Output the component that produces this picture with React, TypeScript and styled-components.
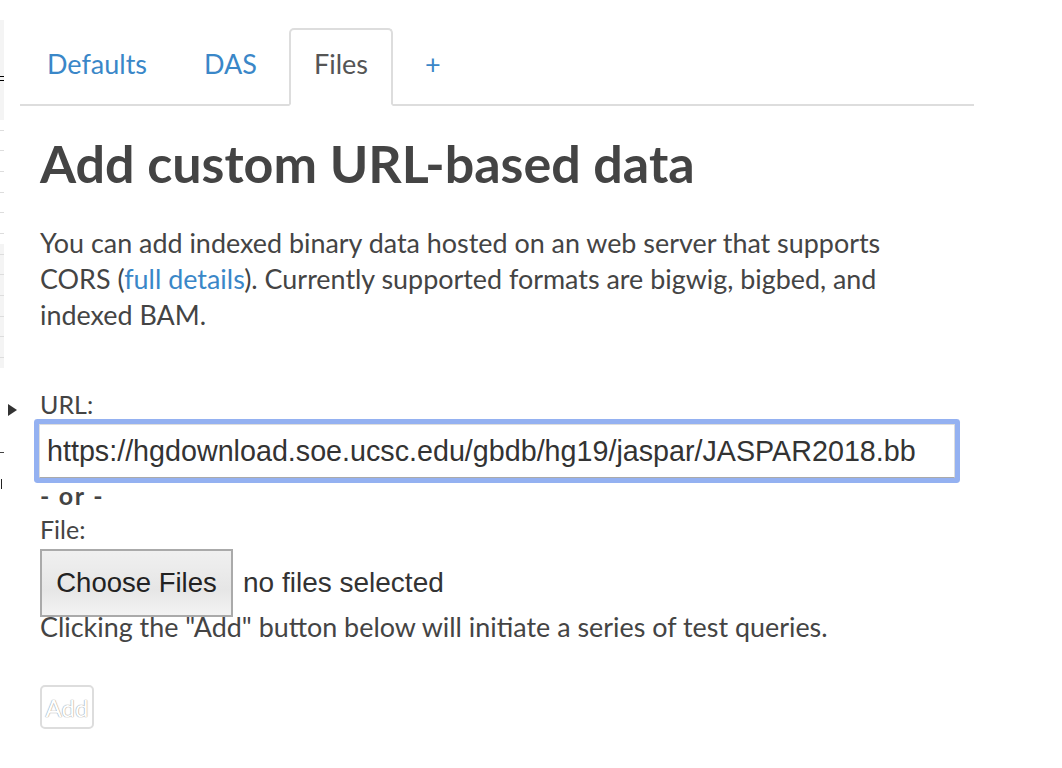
import React from "react";
import styled, { createGlobalStyle } from "styled-components";

const Global = createGlobalStyle`
  html, body { margin: 0; padding: 0; background: #fff; }
  body { font-family: Lato, "Open Sans", sans-serif; color: #444; }
  * { box-sizing: border-box; }
`;

const Page = styled.div`
  display: flex;
  width: 1062px;
  height: 768px;
  overflow: hidden;
  background: #fff;
`;

const Gutter = styled.div`
  width: 20px;
  flex: none;
  display: flex;
  flex-direction: column;
  padding-top: 20px;
`;

const GutterBlock = styled.div<{ $h: number; $bg: string }>`
  width: 4px;
  height: ${(p) => p.$h}px;
  background: ${(p) => p.$bg};
  display: flex;
  flex-direction: column;
  justify-content: space-around;
`;

const GutterTick = styled.div`
  width: 4px;
  height: 1px;
  background: #ddd;
`;

const Equals = styled.div`
  width: 4px;
  height: 5px;
  margin-top: 16px;
  border-top: 1px solid #000;
  border-bottom: 1px solid #000;
`;

const Triangle = styled.div`
  margin: 36px 0 0 8px;
  width: 0;
  height: 0;
  border-top: 6px solid transparent;
  border-bottom: 6px solid transparent;
  border-left: 9px solid #333;
`;

const Dash = styled.div`
  margin-top: 36px;
  width: 4px;
  height: 1px;
  background: #444;
`;

const Paren = styled.div`
  margin-top: 26px;
  width: 2px;
  height: 10px;
  border-left: 1px solid #222;
  margin-left: 1px;
`;

const Main = styled.div`
  width: 954px;
  flex: none;
`;

const TabBar = styled.ul`
  list-style: none;
  margin: 28px 0 0 0;
  padding: 0 0 0 2px;
  display: flex;
  gap: 7px;
  border-bottom: 2px solid #ddd;
  height: 78px;
`;

const Tab = styled.li<{ $active?: boolean }>`
  height: 78px;
  padding: 0 23px 8px;
  display: flex;
  align-items: center;
  font-size: 27px;
  color: ${(p) => (p.$active ? "#555" : "#3a87c8")};
  border: 2px solid ${(p) => (p.$active ? "#ddd" : "transparent")};
  border-bottom-color: ${(p) => (p.$active ? "#fff" : "transparent")};
  border-radius: 5px 5px 0 0;
  background: ${(p) => (p.$active ? "#fff" : "transparent")};
  margin-bottom: -2px;
`;

const Content = styled.div`
  padding: 0 20px;
`;

const Heading = styled.h1`
  margin: 27px 0 0 0;
  font-size: 52px;
  font-weight: 700;
  line-height: 60px;
  color: #444;
`;

const Para = styled.p`
  margin: 32px 0 0 0;
  font-size: 26.9px;
  line-height: 36px;
  color: #444;
  white-space: nowrap;
`;

const Link = styled.a`
  color: #3a87c8;
  text-decoration: none;
`;

const Label = styled.div`
  margin-top: 54px;
  font-size: 25px;
  line-height: 34px;
  color: #444;
`;

const UrlInput = styled.input`
  display: block;
  width: 916px;
  height: 54px;
  margin: 3px 0 0 -1px;
  padding: 0 7px;
  font-family: "Liberation Sans", Arial, sans-serif;
  font-size: 28.7px;
  color: #333;
  border: 1px solid #ddd;
  border-bottom-color: #aaa;
  border-radius: 1px;
  outline: none;
  box-shadow: 0 0 0 5px #94b1f1;
`;

const Or = styled.div`
  margin-top: 3px;
  font-size: 25px;
  font-weight: 700;
  line-height: 28px;
  letter-spacing: 1.7px;
  color: #444;
`;

const FileLabel = styled.div`
  font-size: 25px;
  line-height: 40px;
  color: #444;
`;

const FileRow = styled.div`
  display: flex;
  align-items: center;
  gap: 10px;
  height: 68px;
`;

const ChooseButton = styled.button`
  height: 68px;
  width: 193px;
  padding: 0;
  font-family: "Liberation Sans", Arial, sans-serif;
  font-size: 27.5px;
  color: #222;
  background: linear-gradient(#f0f0f0, #e6e6e6 60%, #f3f3f3);
  border: 2px solid #aaa;
  border-radius: 0;
`;

const NoFiles = styled.span`
  font-family: "Liberation Sans", Arial, sans-serif;
  font-size: 28px;
  color: #333;
`;

const Note = styled.div`
  margin-top: -5px;
  font-size: 26.9px;
  line-height: 30px;
  color: #444;
`;

const AddButton = styled.button`
  display: block;
  margin-top: 43px;
  width: 54px;
  height: 44px;
  padding: 0;
  font-family: Lato, sans-serif;
  font-size: 24px;
  color: #fff;
  text-shadow: 0 0 1px #999, 0 0 1px #999;
  background: #fff;
  border: 2px solid #ddd;
  border-radius: 5px;
`;

export default function App() {
  return (
    <Page>
      <Global />
      <Gutter>
        <GutterBlock $h={100} $bg="#f4f4f4">
          <Equals />
        </GutterBlock>
        <GutterBlock $h={124} $bg="#fff">
          <GutterTick />
          <GutterTick />
          <GutterTick />
          <GutterTick />
          <GutterTick />
          <GutterTick />
        </GutterBlock>
        <GutterBlock $h={124} $bg="#f4f4f4">
          <GutterTick />
          <GutterTick />
          <GutterTick />
          <GutterTick />
          <GutterTick />
          <GutterTick />
        </GutterBlock>
        <Triangle />
        <Dash />
        <Paren />
      </Gutter>
      <Main>
        <TabBar>
          <Tab>Defaults</Tab>
          <Tab>DAS</Tab>
          <Tab $active>Files</Tab>
          <Tab>+</Tab>
        </TabBar>
        <Content>
          <Heading>Add custom URL-based data</Heading>
          <Para>
            You can add indexed binary data hosted on an web server that supports
            <br />
            CORS (<Link href="#">full details</Link>). Currently supported formats are bigwig, bigbed, and
            <br />
            indexed BAM.
          </Para>
          <Label>URL:</Label>
          <UrlInput
            readOnly
            value="https://hgdownload.soe.ucsc.edu/gbdb/hg19/jaspar/JASPAR2018.bb"
          />
          <Or>- or -</Or>
          <FileLabel>File:</FileLabel>
          <FileRow>
            <ChooseButton>Choose Files</ChooseButton>
            <NoFiles>no files selected</NoFiles>
          </FileRow>
          <Note>Clicking the "Add" button below will initiate a series of test queries.</Note>
          <AddButton disabled>Add</AddButton>
        </Content>
      </Main>
    </Page>
  );
}
